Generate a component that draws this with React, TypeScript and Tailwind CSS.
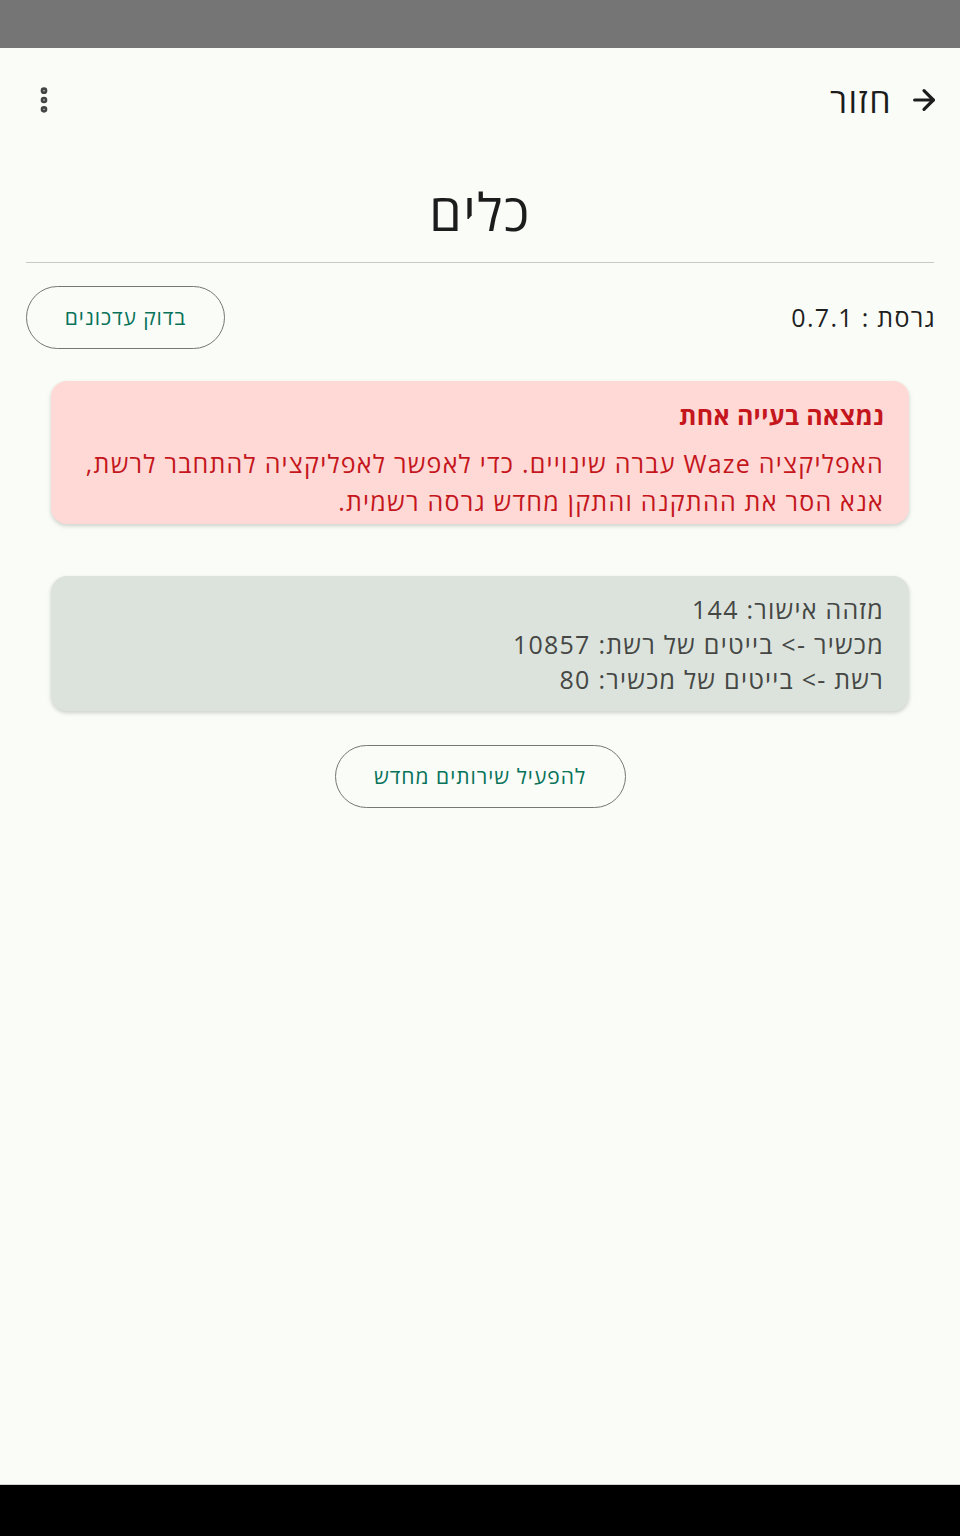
import { ArrowRight, EllipsisVertical } from "lucide-react";

const font = { fontFamily: '"Open Sans", "DejaVu Sans", "Noto Sans", sans-serif' };

export default function App() {
  return (
    <div className="flex flex-col h-[1536px] w-[960px] bg-[#fafcf7]" style={font}>
      <div className="h-12 bg-[#757575]" />

      <div dir="rtl" className="flex-1 flex flex-col">
        {/* toolbar */}
        <div className="h-[104px] flex items-center justify-between pr-5 pl-7">
          <div className="flex items-center gap-4">
            <ArrowRight className="w-8 h-8 text-[#1c1c1c] -scale-x-100 rotate-180" strokeWidth={2.4} />
            <span className="text-[34px] tracking-[1.5px] text-[#1c1c1c]">חזור</span>
          </div>
          <EllipsisVertical className="w-8 h-8 text-[#444]" strokeWidth={3} />
        </div>

        {/* title */}
        <div className="h-[110px] flex items-center justify-center pt-2">
          <h1 className="text-[52px] tracking-[1.5px] text-[#1c1c1c]">כלים</h1>
        </div>

        <div className="mx-[26px] h-px bg-[#c6cac4]" />

        {/* version row */}
        <div className="mx-[26px] mt-[23px] flex items-center justify-between">
          <span className="text-[25px] tracking-[1.3px] text-[#1f1f1f] -mr-0.5">גרסת : 0.7.1</span>
          <button className="w-[199px] h-[63px] rounded-full border-[1.5px] border-[#737873] text-[21px] tracking-[0.9px] font-medium text-[#07735a]">
            בדוק עדכונים
          </button>
        </div>

        {/* problem card */}
        <div className="mx-[51px] mt-8 rounded-2xl bg-[#ffd9d6] shadow-[0_2px_4px_rgba(0,0,0,0.18)] pt-[17px] pb-[4px] pr-[25px] pl-5 text-[#c4161c]">
          <div className="text-[25px] leading-[34px] font-bold tracking-[0.3px]">נמצאה בעייה אחת</div>
          <p className="mt-3 text-[25px] leading-[38px] tracking-[1.25px]">
            האפליקציה Waze עברה שינויים. כדי לאפשר לאפליקציה להתחבר לרשת, אנא הסר את ההתקנה והתקן מחדש גרסה רשמית.
          </p>
        </div>

        {/* stats card */}
        <div className="mx-[51px] mt-[52px] rounded-2xl bg-[#dce3dc] shadow-[0_2px_4px_rgba(0,0,0,0.18)] pt-[16px] pb-[14px] pr-[25px] pl-5 text-[25px] leading-[35px] tracking-[1.25px] text-[#454745]">
          <div>מזהה אישור: 144</div>
          <div>מכשיר -&gt; בייטים של רשת: 10857</div>
          <div>רשת -&gt; בייטים של מכשיר: 80</div>
        </div>

        <div className="mt-[34px] flex justify-center">
          <button className="w-[291px] h-[63px] rounded-full border-[1.5px] border-[#737873] text-[21px] tracking-[1px] font-medium text-[#07735a]">
            להפעיל שירותים מחדש
          </button>
        </div>
      </div>

      <div className="h-[52px] bg-black border-t border-[#d0d0d0]" />
    </div>
  );
}
